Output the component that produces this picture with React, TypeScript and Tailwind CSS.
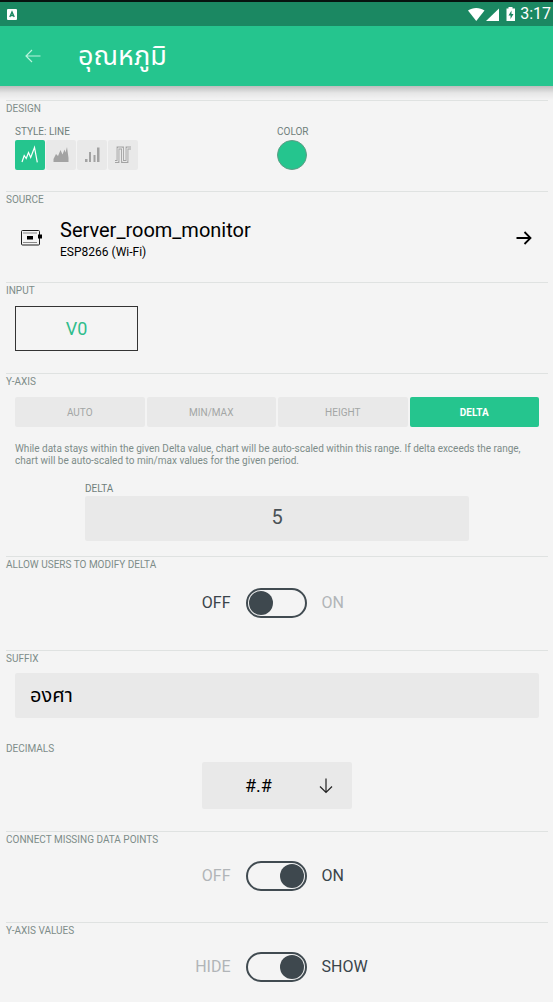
import { useState } from 'react'
import type { ReactNode } from 'react'

const STYLES = [
  {
    id: 'line',
    label: 'LINE',
    icon: <path d="M7 22 9.200 15.500 11.200 18.500 13.500 12.500 15.700 17.500 19.500 7.500 22.300 22.300" fill="none" stroke="currentColor" strokeWidth="1.200" />,
  },
  {
    id: 'area',
    label: 'AREA',
    icon: <path d="M7.500 22V19l2.500-5 2 2 2.500-6 2 4.500 2-5 1 3 1.500-5.500L22.500 18v4z" fill="currentColor" />,
  },
  {
    id: 'bar',
    label: 'BAR',
    icon: <path d="M8 19h2.500v3H8zM12 12h2v10h-2zM16.500 15h2v7h-2zM20 7.500h2.500V22H20z" fill="currentColor" />,
  },
  {
    id: 'binary',
    label: 'BINARY',
    icon: (
      <g fill="none">
        <path d="M7 21.500H10V8H14.500V21.500H19V8H23" stroke="currentColor" strokeWidth="2.800" />
        <path d="M7 21.500H10V8H14.500V21.500H19V8H23" stroke="#e9e9e9" strokeWidth="1" />
      </g>
    ),
  },
]

const AXIS_MODES = ['AUTO', 'MIN/MAX', 'HEIGHT', 'DELTA']

function Section({ title, className, line = true, children }: { title: string; className: string; line?: boolean; children: ReactNode }) {
  return (
    <section className={className}>
      <h2 className={`text-[10px] leading-4 text-[#7d8c89] ${line ? 'border-t border-[#dfe2e1]' : ''}`}>{title}</h2>
      {children}
    </section>
  )
}

function Toggle({ title, off, on, initial }: { title: string; off: string; on: string; initial: boolean }) {
  const [checked, setChecked] = useState(initial)
  return (
    <label className="grid grid-cols-[1fr_auto_1fr] items-center gap-[15px] pr-0.5 text-base leading-[30px]">
      <span className={`text-right ${checked ? 'text-[#b1b5b8]' : 'text-[#39444a]'}`}>{off}</span>
      <input
        type="checkbox"
        role="switch"
        aria-label={title}
        checked={checked}
        onChange={(e) => setChecked(e.target.checked)}
        className="h-[30px] w-[61px] appearance-none rounded-full border-2 border-[#414b51] p-px before:block before:size-6 before:rounded-full before:bg-[#3e484e] checked:before:translate-x-[31px]"
      />
      <span className={checked ? 'text-[#39444a]' : 'text-[#b1b5b8]'}>{on}</span>
    </label>
  )
}

export default function App() {
  const [style, setStyle] = useState('line')
  const [mode, setMode] = useState('DELTA')
  const styleLabel = STYLES.find((s) => s.id === style)?.label

  return (
    <div className="min-h-screen bg-[#f4f4f4] font-['Roboto','Noto_Sans_Thai','Noto_Sans',sans-serif] text-black">
      {/* Status bar */}
      <div className="flex h-[26px] items-center justify-between border-t-2 border-[#07130f] bg-[#1b8862] pr-0.5 pl-[7px] text-white">
        <svg viewBox="0 0 10 11" className="h-[11px] w-[10px]" aria-hidden="true">
          <rect width="10" height="11" rx="1" fill="#fff" />
          <path d="M2.800 8 5 3 7.200 8M3.500 6.500h3" fill="none" stroke="#1b8862" strokeWidth="1.400" />
        </svg>
        <div className="flex items-center">
          <svg viewBox="0 0 48 14" className="h-[14px] w-12" aria-hidden="true" fill="#fff">
            <path d="M0 3.500C4.500 0 12 0 16.500 3.500L8.250 14z" />
            <path d="M31 1.500V14H18z" />
            <path fillRule="evenodd" d="M38.500 1.500h2V0h4v1.500h2.500V14h-8.500zM43.500 3.500 40.500 8.500h2V12l3-5h-2z" />
          </svg>
          <span className="ml-1 text-base leading-6">3:17</span>
        </div>
      </div>

      <header className="flex h-[60px] items-center bg-[#25c58e] text-white">
        <button type="button" aria-label="Back" className="ml-[25px] flex size-4 items-center justify-center">
          <svg viewBox="0 0 16 16" className="size-4" fill="none" stroke="#b9f3dc" strokeWidth="1.200">
            <path d="M15.500 8H1.500M7 2 1 8l6 6" />
          </svg>
        </button>
        <h1 className="ml-[37px] text-[27px] leading-[40px]">อุณหภูมิ</h1>
      </header>
      <div className="h-[14px] bg-linear-to-b from-[#bcbebd] via-[#e6e6e6] to-[#f4f4f4]" />

      <main className="pr-[5px] pl-1.5">
        <Section title="DESIGN" className="pb-[21px]">
          <div className="grid grid-cols-2 px-[9px] pt-[7px]">
            <div>
              <div className="text-[10px] leading-4 text-[#6f7f7b]">STYLE: {styleLabel}</div>
              <div className="flex gap-px">
                {STYLES.map((s) => (
                  <button
                    key={s.id}
                    type="button"
                    aria-label={s.label}
                    aria-pressed={s.id === style}
                    onClick={() => setStyle(s.id)}
                    className={`size-[30px] rounded-xs ${s.id === style ? 'bg-[#25c58e] text-white' : 'bg-[#e9e9e9] text-[#a3a3a3]'}`}
                  >
                    <svg viewBox="0 0 30 30" className="size-[30px]">{s.icon}</svg>
                  </button>
                ))}
              </div>
            </div>
            <div>
              <div className="text-[10px] leading-4 text-[#6f7f7b]">COLOR</div>
              <button type="button" aria-label="Color" className="block size-[30px] rounded-full border border-[#5f9d85] bg-[#25c58e]" />
            </div>
          </div>
        </Section>

        <Section title="SOURCE" className="pb-[14px]">
          <button type="button" className="flex h-[60px] w-full items-center pr-4 pl-[15px] text-left">
            <svg viewBox="0 0 21 16" className="h-4 w-[21px]" fill="none" stroke="#1d1d1d">
              <rect x="0.500" y="0.500" width="18" height="14.500" rx="1" />
              <path d="M2.500 3h14M2.500 12.500h14" strokeDasharray="1 1" />
              <path d="M6 6h6v3.500H6z" fill="#000" stroke="none" />
              <path d="M17 4.500h4v4h-4z" fill="#000" stroke="none" />
            </svg>
            <span className="ml-[18px] flex-1">
              <span className="block text-xl leading-7">Server_room_monitor</span>
              <span className="block text-xs leading-4">ESP8266 (Wi-Fi)</span>
            </span>
            <svg viewBox="0 0 16 14" className="h-[14px] w-4" fill="none" stroke="#000" strokeWidth="1.800">
              <path d="M0.500 7H14.500M8.500 1l6 6-6 6" />
            </svg>
          </button>
        </Section>

        <Section title="INPUT" className="pb-[22px]">
          <div className="px-[9px] pt-[7px]">
            <button type="button" className="h-[45px] w-[123px] border border-[#333] text-lg text-[#2fbd8c]">V0</button>
          </div>
        </Section>

        <Section title="Y-AXIS" className="pb-[15px]">
          <div className="px-[9px] pt-[7px]">
            <div className="grid grid-cols-4 gap-0.5">
              {AXIS_MODES.map((m) => (
                <button
                  key={m}
                  type="button"
                  aria-pressed={m === mode}
                  onClick={() => setMode(m)}
                  className={`h-[30px] rounded-xs text-[10px] ${m === mode ? 'bg-[#25c58e] font-bold text-white' : 'bg-[#e9e9e9] text-[#a3a6a5]'}`}
                >
                  {m}
                </button>
              ))}
            </div>
            <p className="mt-4 text-[10px] leading-3 text-[#7d8c89]">
              While data stays within the given Delta value, chart will be auto-scaled within this range. If delta exceeds the range, chart will be auto-scaled to min/max values for the given period.
            </p>
            <div className="mt-[15px] px-[70px]">
              <label htmlFor="delta" className="block text-[10px] leading-[14px] text-[#6f7f7b]">DELTA</label>
              <input id="delta" defaultValue="5" className="block h-[45px] w-full rounded-xs bg-[#e9e9e9] pb-1 text-center text-xl text-[#4a5257]" />
            </div>
          </div>
        </Section>

        <Section title="ALLOW USERS TO MODIFY DELTA" className="pb-8">
          <div className="pt-[15px]">
            <Toggle title="Allow users to modify delta" off="OFF" on="ON" initial={false} />
          </div>
        </Section>

        <Section title="SUFFIX" className="pb-[23px]">
          <div className="px-[9px] pt-1.5">
            <input aria-label="Suffix" defaultValue="องศา" className="block h-[45px] w-full rounded-xs bg-[#e9e9e9] px-[15px] text-xl" />
          </div>
        </Section>

        <Section title="DECIMALS" line={false} className="pb-[22px]">
          <div className="flex justify-center pt-[5px]">
            <div className="relative">
              <select aria-label="Decimals" defaultValue="#.#" className="block h-[47px] w-[150px] appearance-none rounded-xs bg-[#e9e9e9] pl-[43px] text-lg">
                <option>#</option>
                <option>#.#</option>
                <option>#.##</option>
              </select>
              <svg viewBox="0 0 14 16" className="pointer-events-none absolute top-4 right-[19px] h-4 w-[14px]" fill="none" stroke="#222" strokeWidth="1.200">
                <path d="M7 0.500V14.500M1 8.500l6 6 6-6" />
              </svg>
            </div>
          </div>
        </Section>

        <Section title="CONNECT MISSING DATA POINTS" className="pb-[31px]">
          <div className="pt-[13px]">
            <Toggle title="Connect missing data points" off="OFF" on="ON" initial />
          </div>
        </Section>

        <Section title="Y-AXIS VALUES" className="pb-5">
          <div className="pt-[13px]">
            <Toggle title="Y-axis values" off="HIDE" on="SHOW" initial />
          </div>
        </Section>
      </main>
    </div>
  )
}
